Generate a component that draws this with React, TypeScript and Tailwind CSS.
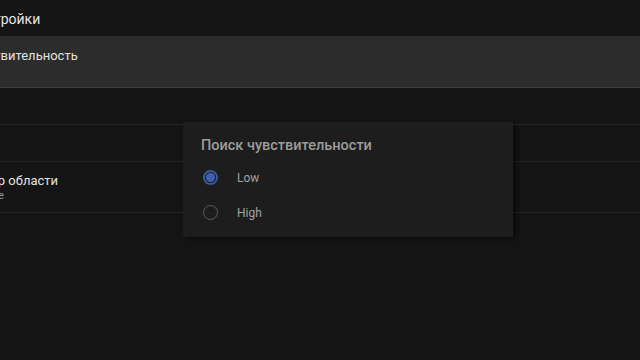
import React, { useState } from 'react';

interface Row {
  title: string;
  subtitle?: string;
  height: string;
  active?: boolean;
}

const rows: Row[] = [
  { title: 'Чувствительность', height: 'h-[52px]', active: true },
  { title: '', height: 'h-[37px]' },
  { title: '', height: 'h-[37px]' },
  { title: 'Выбор области', subtitle: 'Полное', height: 'h-[51px]' },
];

const options = ['Low', 'High'];

export default function App() {
  const [selected, setSelected] = useState('Low');

  return (
    <div
      className="relative w-[640px] h-[360px] overflow-hidden bg-[#151515]"
      style={{ fontFamily: 'Roboto, "Noto Sans", sans-serif' }}
    >
      {/* list is scrolled past the left edge */}
      <div className="ml-[-35px] w-[675px]">
        <div className="h-[36px] flex items-center pl-[4px] pt-[2px] text-[14px] text-[#e4e4e4]">Настройки</div>
        {rows.map((row, i) => (
          <div
            key={i}
            className={`${row.height} border-b ${
              row.active ? 'bg-[#2c2c2c] border-[#3d3d3d] pt-[12px]' : 'border-[#242424] pt-[11px]'
            }`}
          >
            {row.title && <div className="text-[13px] leading-4 text-[#e2e2e2]">{row.title}</div>}
            {row.subtitle && <div className="text-[11px] leading-[14px] text-[#9a9a9a]">{row.subtitle}</div>}
          </div>
        ))}
      </div>

      {/* dialog */}
      <div className="absolute left-[183px] top-[122px] w-[330px] h-[115px] bg-[#1f1f1f]/[0.88] shadow-[4px_2px_6px_rgba(0,0,0,0.5)]">
        <div className="pl-[18px] pt-[15px] text-[14.5px] leading-[18px] font-medium text-[#9c9c9c]">
          Поиск чувствительности
        </div>
        <div className="mt-[5px] flex flex-col">
          {options.map(opt => (
            <button
              key={opt}
              onClick={() => setSelected(opt)}
              className="h-[35px] flex items-center pl-[20px] text-left"
            >
              {selected === opt ? (
                <span className="w-[15px] h-[15px] rounded-full border-2 border-[#3a5a9c] flex items-center justify-center">
                  <span className="w-[9px] h-[9px] rounded-full bg-[#3f61b0]" />
                </span>
              ) : (
                <span className="w-[15px] h-[15px] rounded-full border-[1.5px] border-[#5c5c5c]" />
              )}
              <span className="ml-[19px] text-[12px] text-[#a2a2a2]">{opt}</span>
            </button>
          ))}
        </div>
      </div>
    </div>
  );
}
